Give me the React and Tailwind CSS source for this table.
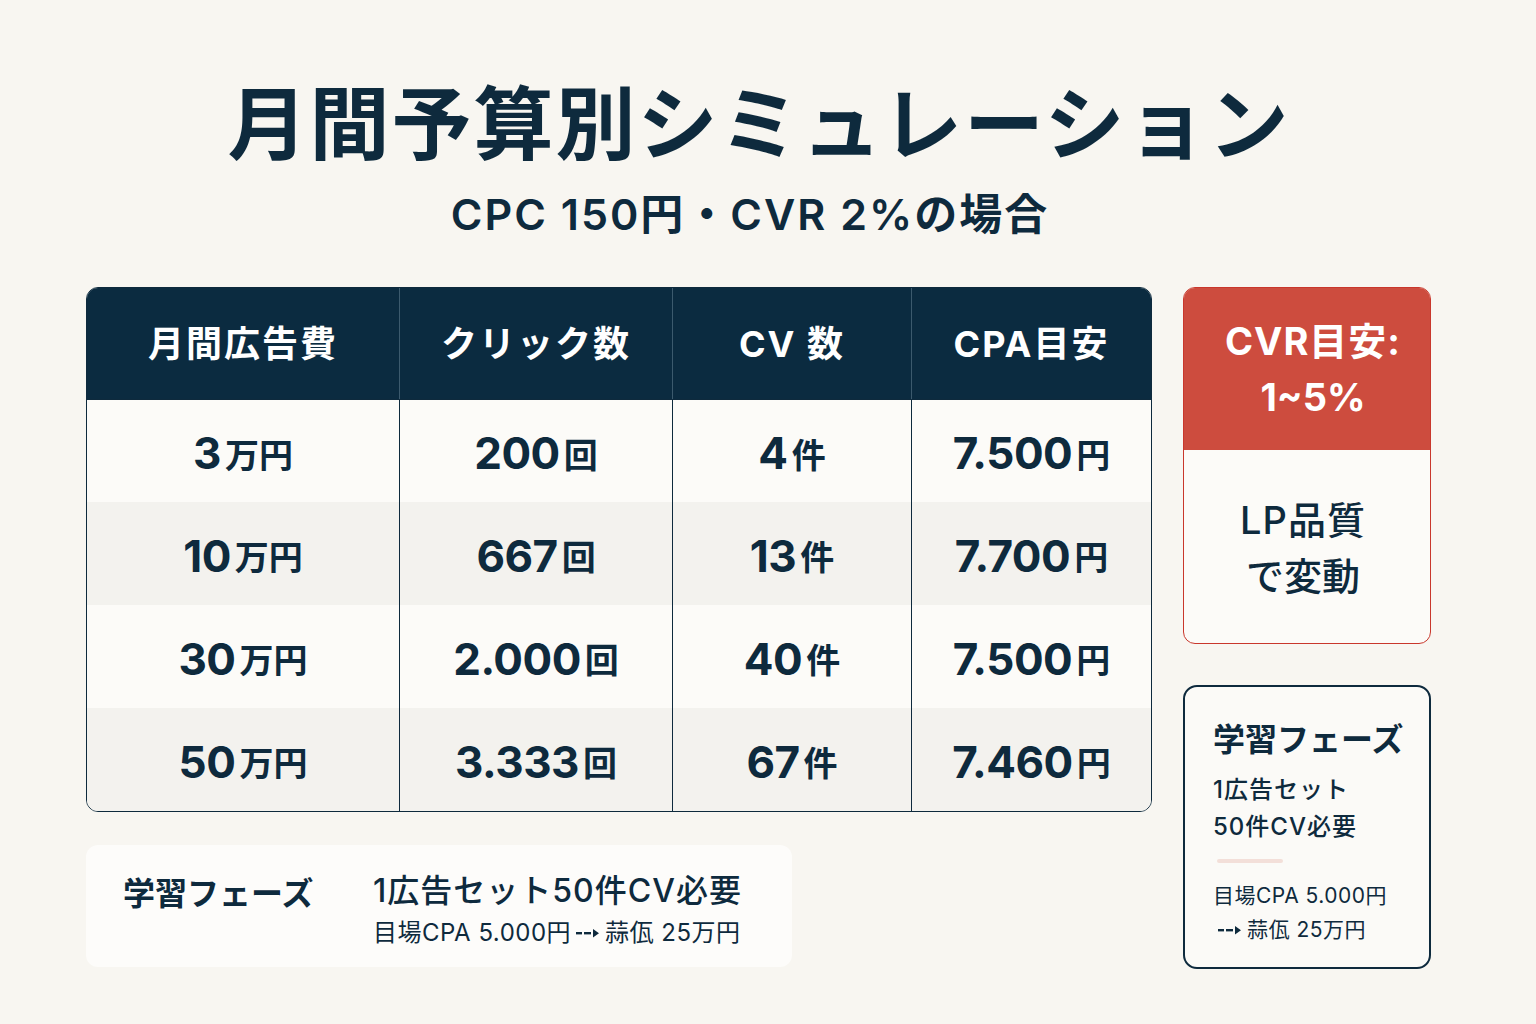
import React from "react";

const FONT = { fontFamily: "Inter, 'Noto Sans CJK JP', sans-serif" };
const CJK = { fontFamily: "'Noto Sans CJK JP', sans-serif" };

const rows = [
  [["3", "万円"], ["200", "回"], ["4", "件"], ["7.500", "円"]],
  [["10", "万円"], ["667", "回"], ["13", "件"], ["7.700", "円"]],
  [["30", "万円"], ["2.000", "回"], ["40", "件"], ["7.500", "円"]],
  [["50", "万円"], ["3.333", "回"], ["67", "件"], ["7.460", "円"]],
];

const headers = ["月間広告費", "クリック数", "CV 数", "CPA目安"];

function Arrow() {
  return (
    <svg width="26" height="12" viewBox="0 0 26 12" className="inline-block mx-[4px] align-middle">
      <rect x="1" y="5" width="6" height="2.4" fill="#0e2a3d" />
      <rect x="9" y="5" width="7" height="2.4" fill="#0e2a3d" />
      <polygon points="18,2 24,6.2 18,10.4" fill="#0e2a3d" />
    </svg>
  );
}

export default function App() {
  return (
    <div className="w-[1536px] h-[1024px] bg-[#f8f6f1] text-[#0e2a3d] flex flex-col items-center overflow-hidden" style={FONT}>
      <h1 className="mt-[70px] text-[80px] leading-[96px] font-bold tracking-[2px] pr-[18px]" style={CJK}>
        月間予算別シミュレーション
      </h1>
      <div className="mt-[22px] text-[43px] leading-[52px] font-semibold tracking-[2px] pr-[36px]">
        CPC 150円・CVR 2%の場合
      </div>

      <div className="mt-[47px] w-full px-[86px] flex gap-[31px]">
        <div className="flex flex-col w-[1066px]">
          <div className="rounded-[12px] border-[1.5px] border-[#0e2a3d] overflow-hidden bg-[#fcfbf8]">
            <div className="grid grid-cols-[312px_273px_239px_1fr] h-[111px] bg-[#0b2b40]">
              {headers.map((h, i) => (
                <div
                  key={i}
                  className={`flex items-center justify-center text-white text-[36px] font-bold tracking-[2px] ${i > 0 ? "border-l border-[#3c5a6d]" : ""}`}
                >
                  {h}
                </div>
              ))}
            </div>
            {rows.map((r, ri) => (
              <div
                key={ri}
                className={`grid grid-cols-[312px_273px_239px_1fr] h-[103px] border-[#0e2a3d] ${ri === 0 ? "border-t" : ""} ${ri % 2 === 1 ? "bg-[#f3f2ee]" : "bg-[#fcfbf8]"}`}
              >
                {r.map((c, ci) => (
                  <div
                    key={ci}
                    className={`flex items-center justify-center pt-[4px] ${ci > 0 ? "border-l border-[#0e2a3d]" : ""}`}
                  >
                    <span className="text-[44px] font-bold tracking-[-0.5px]">{c[0]}</span>
                    <span className="text-[34px] font-bold ml-[4px]" style={CJK}>{c[1]}</span>
                  </div>
                ))}
              </div>
            ))}
          </div>

          <div className="mt-[33px] w-[706px] h-[122px] rounded-[12px] bg-[#fdfcfa] flex items-start pl-[37px] pt-[26px]">
            <div className="text-[32px] font-bold leading-[40px] w-[250px]" style={CJK}>学習フェーズ</div>
            <div className="flex flex-col">
              <div className="text-[32px] font-medium leading-[40px] tracking-[1px]">1広告セット50件CV必要</div>
              <div className="mt-[6px] text-[24px] leading-[32px] font-normal tracking-[0.5px] flex items-center">
                目場CPA 5.000円<Arrow />蒜佤 25万円
              </div>
            </div>
          </div>
        </div>

        <div className="flex flex-col w-[248px]">
          <div className="h-[357px] rounded-[12px] border-[1.5px] border-[#c9372c] overflow-hidden flex flex-col bg-[#fcfbf8]">
            <div className="h-[162px] bg-[#cd4c3e] flex flex-col items-center justify-center text-white font-bold text-[38px] leading-[56px] pl-[12px]">
              <div className="tracking-[1px]">CVR目安:</div>
              <div>1~5%</div>
            </div>
            <div className="flex-1 flex flex-col items-center justify-center text-[38px] leading-[56px] font-medium pt-[2px] pr-[8px]">
              <div className="tracking-[1px]">LP品質</div>
              <div>で変動</div>
            </div>
          </div>

          <div className="mt-[41px] h-[284px] rounded-[14px] border-2 border-[#0e2a3d] bg-[#fbfaf7] flex flex-col pl-[28px] pt-[30px]">
            <div className="text-[32px] font-bold leading-[40px]" style={CJK}>学習フェーズ</div>
            <div className="mt-[14px] text-[24px] font-medium leading-[37px] tracking-[1px]">1広告セット</div>
            <div className="text-[24px] font-medium leading-[37px] tracking-[1px]">50件CV必要</div>
            <div className="mt-[14px] ml-[4px] w-[66px] h-[4px] rounded bg-[#f3dfd9]"></div>
            <div className="mt-[16px] text-[21px] leading-[34px] tracking-[0.5px]">目場CPA 5.000円</div>
            <div className="text-[21px] leading-[34px] flex items-center tracking-[0.5px]">
              <Arrow />蒜佤 25万円
            </div>
          </div>
        </div>
      </div>
    </div>
  );
}
